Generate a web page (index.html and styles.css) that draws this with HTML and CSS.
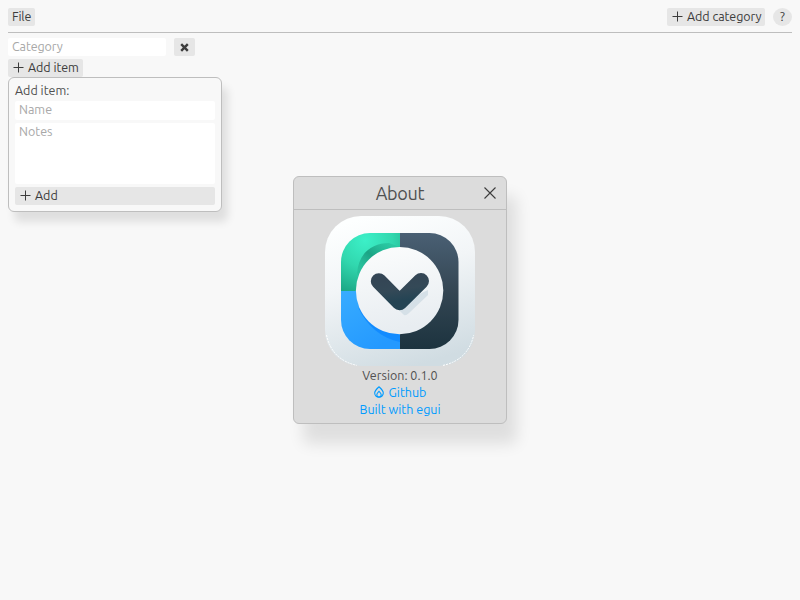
FILE: index.html
```html
<!DOCTYPE html>
<html lang="en">
<head>
<meta charset="utf-8">
<title>Categories</title>
<link rel="stylesheet" href="styles.css">
</head>
<body>
<header class="topbar">
  <button class="btn file"><span>File</span></button>
  <div class="actions">
    <button class="btn add-category"><svg class="plus" viewBox="0 0 11 11"><path d="M5.5 0.5V10.5M0.5 5.5H10.5"/></svg><span>Add category</span></button>
    <button class="btn help"><span>?</span></button>
  </div>
</header>
<main>
  <div class="row">
    <div class="field category"><span>Category</span></div>
    <button class="btn remove"><svg viewBox="0 0 9 9"><path d="M1.2 1.2L7.8 7.8M7.8 1.2L1.2 7.8"/></svg></button>
  </div>
  <div class="anchor">
    <button class="btn add-item"><svg class="plus" viewBox="0 0 11 11"><path d="M5.5 0.5V10.5M0.5 5.5H10.5"/></svg><span>Add item</span></button>
    <section class="popup">
      <div class="label"><span>Add item:</span></div>
      <div class="field name"><span>Name</span></div>
      <div class="field notes"><span>Notes</span></div>
      <button class="btn add"><svg class="plus" viewBox="0 0 11 11"><path d="M5.5 0.5V10.5M0.5 5.5H10.5"/></svg><span>Add</span></button>
    </section>
  </div>
</main>
<section class="window">
  <div class="titlebar"><h1>About</h1><svg class="close" viewBox="0 0 12 12"><path d="M0.5 0.5L11.5 11.5M11.5 0.5L0.5 11.5"/></svg></div>
  <div class="content">
    <svg class="logo" viewBox="0 0 150 150">
      <defs>
        <linearGradient id="plate" x1="0.3" y1="0" x2="0.6" y2="1"><stop offset="0" stop-color="#fdffff"/><stop offset="0.4" stop-color="#f2f5f7"/><stop offset="1" stop-color="#d0dce2"/></linearGradient>
        <radialGradient id="green" gradientUnits="userSpaceOnUse" cx="40" cy="24" r="55"><stop offset="0" stop-color="#3cf0c8"/><stop offset="0.5" stop-color="#31d7ae"/><stop offset="1" stop-color="#1ca886"/></radialGradient>
        <linearGradient id="blue" x1="0" y1="0" x2="0.6" y2="1"><stop offset="0" stop-color="#38acff"/><stop offset="1" stop-color="#2499ff"/></linearGradient>
        <linearGradient id="dark" x1="0" y1="0" x2="0" y2="1"><stop offset="0" stop-color="#4a6074"/><stop offset="0.5" stop-color="#344653"/><stop offset="1" stop-color="#1c333f"/></linearGradient>
        <linearGradient id="disc" x1="0" y1="0" x2="0.2" y2="1"><stop offset="0" stop-color="#fcfdfd"/><stop offset="1" stop-color="#e8edf1"/></linearGradient>
        <linearGradient id="tick" x1="0" y1="0" x2="0.3" y2="1"><stop offset="0" stop-color="#344655"/><stop offset="0.5" stop-color="#344957"/><stop offset="1" stop-color="#244454"/></linearGradient>
        <linearGradient id="greenshade" x1="0" y1="1" x2="1" y2="0"><stop offset="0" stop-color="#24b593" stop-opacity="0.2"/><stop offset="0.5" stop-color="#1ba384"/><stop offset="1" stop-color="#29c8a2" stop-opacity="0.5"/></linearGradient>
        <clipPath id="tile"><rect x="16" y="17" width="117.5" height="116" rx="29"/></clipPath>
      </defs>
      <rect width="150" height="150" rx="36" fill="url(#plate)"/>
      <path d="M1.5 119Q7 144 32 149.4M118 149.4Q143 144 148.7 119" fill="none" stroke="#fff" stroke-dasharray="2 1"/>
      <g clip-path="url(#tile)">
        <rect x="16" y="17" width="59" height="58" fill="url(#green)"/>
        <rect x="16" y="75" width="59" height="58" fill="url(#blue)"/>
        <rect x="75" y="17" width="59" height="116" fill="url(#dark)"/>
        <path d="M32 57C34 36 48 27 64 27L75 31V45H45L35 64Z" fill="url(#greenshade)"/>
        <path d="M33 91C42 111 57 122 75 126V112C56 112 42 104 36 94Z" fill="#128bff"/>
      </g>
      <circle cx="74.6" cy="74.6" r="43.7" fill="url(#disc)"/>
      <path d="M66 86L79 99Q81 100 84 97L103 79V74L90 80Z" fill="#d5e0e7"/>
      <path d="M53.8 65.2L74.5 86.2L96 65" fill="none" stroke="url(#tick)" stroke-width="16" stroke-linecap="round" stroke-linejoin="round"/>
    </svg>
    <p class="version"><span>Version: 0.1.0</span></p>
    <a class="github"><svg viewBox="0 0 10 12"><path d="M5 .8C6.8 2.4 9.3 4.5 9.3 7.1A4.3 4.1 0 0 1 .7 7.1C.7 4.5 3.2 2.4 5 .8Z"/><path d="M5 5.3C6 6.3 7.2 7.3 7.2 8.8A2.2 2.2 0 0 1 2.8 8.8C2.8 7.3 4 6.3 5 5.3Z"/></svg><span>Github</span></a>
    <a class="egui"><span>Built with egui</span></a>
  </div>
</section>
</body>
</html>
```
FILE: styles.css
```css
* { box-sizing: border-box; }
body {
  margin: 0;
  width: 800px;
  height: 600px;
  padding: 8px;
  overflow: hidden;
  background: #f8f8f8;
  color: #505050;
  font: 12.5px/16px Ubuntu, "Noto Sans", sans-serif;
}
span, h1 { white-space: nowrap; }
svg { display: block; flex: none; }
.topbar {
  display: flex;
  justify-content: space-between;
  height: 25px;
  border-bottom: 1px solid #bebebe;
}
.actions { display: flex; gap: 8px; }
.btn {
  display: flex;
  align-items: center;
  height: 18px;
  padding: 0 4px;
  border: 0;
  border-radius: 2px;
  background: #e6e6e6;
  color: #3c3c3c;
  font: inherit;
}
.btn span { padding-bottom: 2px; }
.file { width: 27px; letter-spacing: -0.15px; }
.plus { width: 11px; height: 11px; margin: 0 4px 1px 1px; stroke: #3c3c3c; stroke-width: 1; fill: none; }
.add-category { width: 98px; letter-spacing: -0.05px; }
.help { width: 19px; border-radius: 50%; justify-content: center; }
main { padding-top: 5px; }
.row { display: flex; gap: 8px; height: 18px; }
.field { padding: 0 4px; border-radius: 2px; background: #fff; color: #a8a8a8; }
.category { width: 158px; letter-spacing: -0.1px; }
.remove { width: 21px; padding: 0 6px; }
.remove svg { width: 9px; height: 9px; stroke: #3c3c3c; stroke-width: 2.4; }
.anchor { position: relative; margin-top: 3px; }
.add-item { width: 75px; letter-spacing: -0.05px; }
.popup {
  position: absolute;
  left: 0;
  top: 18px;
  width: 214px;
  height: 135px;
  padding: 5px 6px;
  border: 1px solid #bebebe;
  border-radius: 6px;
  background: #f8f8f8;
  box-shadow: 6px 10px 8px rgba(0, 0, 0, 0.1);
}
.label { height: 18px; line-height: 14px; }
.name { height: 19px; }
.notes { height: 61px; margin: 3px 0; }
.add { width: 100%; }
.window {
  position: absolute;
  left: 293px;
  top: 176px;
  width: 214px;
  height: 248px;
  border: 1px solid #bebebe;
  border-radius: 6px;
  background: #dcdcdc;
  box-shadow: 10px 20px 15px rgba(0, 0, 0, 0.1);
}
.titlebar {
  position: relative;
  display: flex;
  justify-content: center;
  height: 33px;
  border-bottom: 1px solid #bebebe;
}
h1 { margin: 0; font-size: 18px; font-weight: 400; line-height: 33px; letter-spacing: -0.3px; }
.close { position: absolute; right: 10px; top: 10px; width: 12px; height: 12px; fill: none; stroke: #3c3c3c; stroke-width: 1.1; }
.content { display: flex; flex-direction: column; align-items: center; padding-top: 6px; line-height: 17px; }
.logo { width: 150px; height: 150px; }
p { margin: 1px 0 0; }
.content a { display: flex; align-items: center; height: 17px; color: #009bff; }
.github svg { width: 10px; height: 12px; margin: 0 5px 1px 0; fill: none; stroke: #009bff; stroke-width: 1.1; }
```
